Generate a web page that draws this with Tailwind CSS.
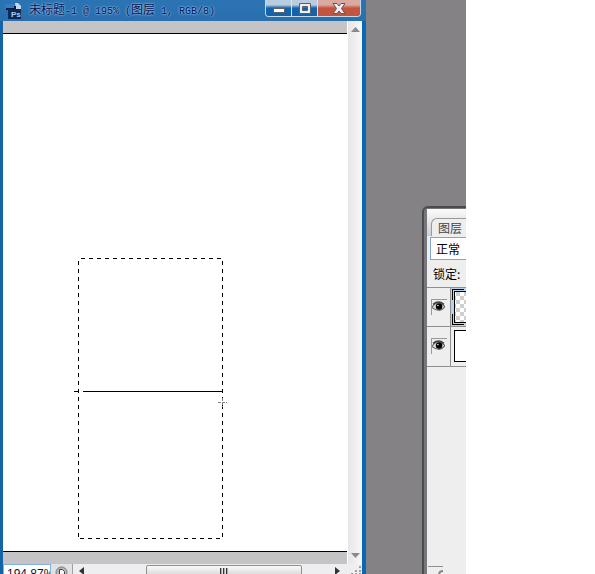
<!DOCTYPE html>
<html lang="zh-CN">
<head>
    <meta charset="UTF-8">
    <meta name="viewport" content="width=device-width, initial-scale=1.0">
    <title>未标题-1</title>
    <script src="https://cdn.jsdelivr.net/npm/@tailwindcss/browser@4"></script>
</head>
<body class="bg-white h-screen flex overflow-hidden font-['Liberation_Sans','Noto_Sans_CJK_SC',sans-serif] text-black">
    <!-- Workspace -->
    <main class="flex-1 min-w-0 h-full flex bg-[#858285] overflow-hidden">

        <!-- Document window -->
        <section class="flex-1 min-w-0 flex flex-col bg-[#0a5ba3]">
            <header class="h-[21px] shrink-0 flex items-start pl-[5px] pr-1 bg-linear-to-b from-[#2b74b3] to-[#2a6fae]">
                <svg class="w-4 h-4 mt-[3px] shrink-0" viewBox="0 0 16 16" aria-hidden="true">
                    <path d="M0 1h9l3 2v3H0z" fill="#2f7fc0"/>
                    <path d="M10 0h3l3 3v4h-5z" fill="#c3d6ea"/>
                    <path d="M1 5h9v2H1zM9 3h2v4H9z" fill="#06183c"/>
                    <rect x="3" y="6" width="13" height="10" fill="#0a2a5e"/>
                    <text x="6" y="14" font-size="8" font-weight="bold" font-family="Liberation Sans" fill="#a9d2f2">Ps</text>
                </svg>
                <h1 class="ml-2 mt-px flex-1 font-['Liberation_Mono','Noto_Sans_CJK_SC',monospace] text-[10px] leading-5 whitespace-pre text-[#000f52] text-shadow-[0_0_2px_#9ccbf0,0_0_2px_#9ccbf0]"><span class="text-xs leading-5">未标题</span>-1 @ 195% (<span class="text-xs leading-5">图层</span> 1, RGB/8)</h1>
                <div class="h-[17px] w-24 shrink-0 mr-px flex border border-t-0 border-[#c5d9ea] rounded-b overflow-hidden">
                    <button aria-label="最小化" class="flex-1 flex items-center justify-center border-r border-[#d6e4f0] bg-linear-to-b from-[#b9cde0] from-30% to-[#1462ac] to-50%">
                        <svg class="w-3 h-2 mt-1" viewBox="0 0 12 8"><rect x=".5" y="2.5" width="11" height="4" fill="#fff" stroke="#56616e"/></svg>
                    </button>
                    <button aria-label="最大化" class="flex-1 flex items-center justify-center border-r border-[#d6e4f0] bg-linear-to-b from-[#b9cde0] from-30% to-[#1462ac] to-50%">
                        <svg class="w-3 h-[11px]" viewBox="0 0 12 11"><path d="M.5.5h11v10H.5zM3.500 3.500v4h5v-4z" fill="#eee" fill-rule="evenodd" stroke="#56616e"/></svg>
                    </button>
                    <button aria-label="关闭" class="w-[42px] flex items-center justify-center bg-linear-to-b from-[#dba99f] from-30% to-[#c5543f] to-50%">
                        <svg class="w-3.5 h-[11px]" viewBox="0 0 14 11"><path d="M1 .5h4l2 2.500 2-2.500h4L9.500 5.500l3.500 5H9L7 8l-2 2.500H1l3.500-5z" fill="#eee" stroke="#5c5560"/></svg>
                    </button>
                </div>
            </header>

            <div class="flex-1 min-h-0 flex flex-col border-l-[3px] border-r-4 border-l-[#1463a5] border-r-[#0668b8]">
                <div class="flex-1 min-h-0 flex">
                    <div class="flex-1 min-w-0 flex flex-col bg-[#c5c3c6]">
                        <div class="h-3 shrink-0"></div>
                        <!-- Canvas with marching ants, drawn line and cursor -->
                        <div class="flex-1 min-h-0 bg-white border-y border-black overflow-hidden">
                            <svg class="block w-[230px] h-[510px]" viewBox="0 0 230 510" fill="none" stroke="#000" shape-rendering="crispEdges" aria-label="选区">
                                <g stroke-dasharray="4 4">
                                    <path d="M78 224.500H219"/>
                                    <path d="M77 504.500H219"/>
                                    <path d="M75.500 227V504"/>
                                    <path d="M219.500 227V504"/>
                                </g>
                                <path d="M80 357.500H219M71 357.500h4"/>
                                <path d="M215 368.500h9M219.500 364v9" stroke="#858285" stroke-dasharray="3 1"/>
                            </svg>
                        </div>
                        <div class="h-3 shrink-0"></div>
                    </div>
                    <div class="w-[15px] shrink-0 flex flex-col items-center justify-between bg-linear-to-r from-[#e6e6e8] to-[#f8f8fa] border-l border-white py-1">
                        <svg class="w-[9px] h-[9px]" viewBox="0 0 9 9" aria-hidden="true"><path d="M4.500 2L0 7h9z" fill="#8a8a8c"/></svg>
                        <svg class="w-[9px] h-[9px]" viewBox="0 0 9 9" aria-hidden="true"><path d="M4.500 7L0 2h9z" fill="#8a8a8c"/></svg>
                    </div>
                </div>

                <!-- Status bar -->
                <footer class="h-2.5 shrink-0 flex overflow-hidden bg-[#eeedef]">
                    <input aria-label="缩放" value="194.87%" class="block w-12 h-5 shrink-0 pl-[3px] bg-white border border-[#7fb1dc] text-xs leading-4 text-[#101040]">
                    <button aria-label="状态" class="w-[22px] h-5 shrink-0 flex justify-center items-start border-r border-[#a0a0a2] bg-[#e2e1e3]">
                        <svg class="w-[13px] h-[13px] mt-0.5" viewBox="0 0 13 13"><circle cx="6.500" cy="6.500" r="5.500" fill="#b8b8ba" stroke="#777"/><path d="M4.500 3.500h3l2 2v5h-5z" fill="#f4f4f4" stroke="#444"/></svg>
                    </button>
                    <svg class="w-2 h-2.5 ml-1 mt-0.5 shrink-0" viewBox="0 0 8 10" aria-hidden="true"><path d="M2 5l5-4v8z" fill="#333"/></svg>
                    <div class="flex-1 flex items-start ml-[61px] mr-8">
                        <div class="mt-px w-full h-[14px] flex justify-center rounded-t-xs border border-[#8f8f92] bg-linear-to-b from-[#fafafa] to-[#cfcfd1]">
                            <svg class="w-2 h-2 mt-0.5" viewBox="0 0 8 8" shape-rendering="crispEdges"><path d="M.5 0v8M3.500 0v8M6.500 0v8" stroke="#333"/><path d="M1.500 0v8M4.500 0v8M7.500 0v8" stroke="#aaa"/></svg>
                        </div>
                    </div>
                    <svg class="w-2 h-2.5 mt-0.5 mr-2 shrink-0" viewBox="0 0 8 10" aria-hidden="true"><path d="M6 5L1 1v8z" fill="#333"/></svg>
                    <svg class="w-3 h-2.5 shrink-0" viewBox="0 0 12 10" aria-hidden="true"><path d="M9 2h2v2H9zM5 6h2v2H5zM9 6h2v2H9zM1 9h2v1H1zM5 9h2v1H5zM9 9h2v1H9z" fill="#a0a0a3"/></svg>
                </footer>
            </div>
        </section>

        <!-- Layers panel -->
        <aside class="ml-14 mt-[206px] w-11 shrink-0 flex flex-col rounded-tl-md border-l-2 border-t-2 border-[#4c4b4f] bg-[#77767b] pl-[3px] pt-px overflow-hidden text-xs font-['Noto_Sans_CJK_SC',sans-serif] whitespace-nowrap">
            <div class="flex-1 flex flex-col bg-[#eeeeee] rounded-tl-sm">
                <div class="h-[27px] shrink-0 flex items-end pl-1 bg-linear-to-b from-[#fafafa] to-[#d0d0d2]">
                    <button class="w-[42px] h-[18px] shrink-0 pl-1.5 text-left leading-3 text-[#444] bg-[#eeeeee] border-l border-t border-[#99999c] rounded-tl-md">图层</button>
                </div>
                <select aria-label="混合模式" class="appearance-none mt-px ml-[3px] h-[23px] w-12 shrink-0 pl-[5px] bg-white border border-[#7fa6cf] leading-5">
                    <option>正常</option>
                </select>
                <div class="h-[27px] shrink-0 pl-1.5 leading-7">锁定:</div>

                <ul class="shrink-0 border-t border-[#8f8f91]">
                    <li class="h-[39px] flex border-b border-[#8f8f91]">
                        <button aria-label="显示图层 1" class="w-4 h-4 ml-1 mt-[11px] mr-[3px] shrink-0 flex items-start border-l border-t border-[#999]">
                            <svg class="w-[13px] h-[11px] mt-px shrink-0" viewBox="0 0 12 10"><path d="M0 6Q3 1 6 1.500T12 5Q9 9 6 8.500T0 6z" fill="#ddd" stroke="#666"/><circle cx="6.500" cy="5" r="3" fill="#000"/><path d="M1 3Q6-1 11 3" fill="none" stroke="#444" stroke-width="1.500"/><circle cx="5.500" cy="4" r=".7" fill="#fff"/></svg>
                        </button>
                        <div class="flex-1 border-l border-[#8f8f91] bg-[#b9d3ec] pl-px overflow-hidden">
                            <svg class="block w-9 h-[38px]" viewBox="0 0 36 38" shape-rendering="crispEdges" aria-hidden="true">
                                <defs><pattern id="checker" width="8" height="8" patternUnits="userSpaceOnUse"><path d="M0 0h8v8H0z" fill="#fff"/><path d="M0 0h4v4H0zM4 4h4v4H4z" fill="#cfcfcf"/></pattern></defs>
                                <path d="M.5 12V1.500H12M.5 26V36.500H12" fill="none" stroke="#000"/>
                                <rect x="2.500" y="3.500" width="32" height="31" fill="url(#checker)" stroke="#000"/>
                            </svg>
                        </div>
                    </li>
                    <li class="h-10 flex border-b border-[#8f8f91]">
                        <button aria-label="显示背景" class="w-4 h-4 ml-1 mt-[11px] mr-[3px] shrink-0 flex items-start border-l border-t border-[#999]">
                            <svg class="w-[13px] h-[11px] mt-px shrink-0" viewBox="0 0 12 10"><path d="M0 6Q3 1 6 1.500T12 5Q9 9 6 8.500T0 6z" fill="#ddd" stroke="#666"/><circle cx="6.500" cy="5" r="3" fill="#000"/><path d="M1 3Q6-1 11 3" fill="none" stroke="#444" stroke-width="1.500"/><circle cx="5.500" cy="4" r=".7" fill="#fff"/></svg>
                        </button>
                        <div class="flex-1 border-l border-[#8f8f91] pl-[3px] pt-[3px] overflow-hidden">
                            <div class="w-8 h-8 bg-white border border-black"></div>
                        </div>
                    </li>
                </ul>

                <div class="mt-auto h-2 ml-px w-[15px] border-t border-[#8f8f91] flex justify-end overflow-hidden">
                    <svg class="w-[5px] h-3 mt-[3px]" viewBox="0 0 5 12" aria-hidden="true"><path d="M5 1Q1 1 1 5v6" fill="none" stroke="#888" stroke-width="2"/></svg>
                </div>
            </div>
        </aside>
    </main>

    <div class="w-[129px] shrink-0 bg-white"></div>
</body>
</html>
